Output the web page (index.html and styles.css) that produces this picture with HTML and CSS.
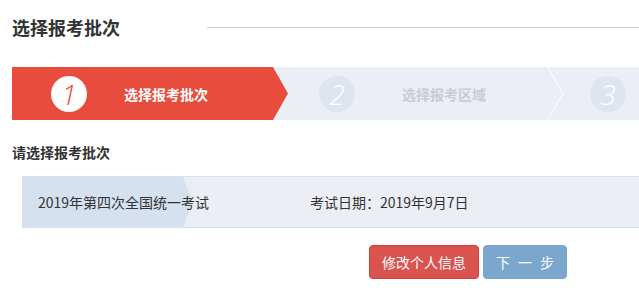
FILE: index.html
```html
<!DOCTYPE html>
<html lang="zh">
<head>
<meta charset="utf-8">
<link rel="stylesheet" href="styles.css">
</head>
<body>
<div class="page">
  <div class="title-row">
    <h1 class="title">选择报考批次</h1>
    <div class="title-line"></div>
  </div>

  <div class="steps">
    <div class="step step-active">
      <span class="num num-active">1</span>
      <span class="step-label">选择报考批次</span>
    </div>
    <div class="step step-2">
      <span class="num">2</span>
      <span class="step-label label-muted">选择报考区域</span>
      <svg class="chev" width="17" height="53" viewBox="0 0 17 53"><polyline points="0.5,0 16,26.5 0.5,53" fill="none" stroke="#ffffff" stroke-width="1"/></svg>
      <span class="num num-3">3</span>
    </div>
  </div>

  <div class="subtitle">请选择报考批次</div>

  <div class="batch">
    <div class="batch-name">2019年第四次全国统一考试</div>
    <div class="batch-date">考试日期：2019年9月7日</div>
  </div>

  <div class="actions">
    <button class="btn btn-red">修改个人信息</button>
    <button class="btn btn-blue">下一步</button>
  </div>
</div>
</body>
</html>
```

FILE: styles.css
```css
* { box-sizing: border-box; }
html, body { margin: 0; padding: 0; background: #ffffff; }
body {
  font-family: "Noto Sans CJK SC", "Noto Sans", sans-serif;
  color: #333333;
  width: 639px;
  overflow: hidden;
}
.page { padding-top: 14px; }

.title-row {
  display: flex;
  align-items: center;
  padding-left: 12px;
  height: 26px;
}
.title {
  margin: 0;
  font-size: 18px;
  font-weight: bold;
  line-height: 26px;
  color: #333333;
}
.title-line {
  flex: 1;
  height: 1px;
  background: #cccccc;
  margin-left: 87px;
}

.steps {
  margin-top: 27px;
  margin-left: 12px;
  height: 53px;
  background: #ebeef4;
  display: flex;
}
.step {
  display: flex;
  align-items: center;
  height: 53px;
}
.step-active {
  width: 276px;
  background: #e84c3d;
  clip-path: polygon(0 0, 261px 0, 276px 50%, 261px 100%, 0 100%);
  padding-left: 39px;
}
.num {
  width: 36px;
  height: 36px;
  border-radius: 50%;
  background: #dfe5ef;
  color: #ffffff;
  font-family: "Open Sans", "Noto Sans", sans-serif;
  font-style: italic;
  font-weight: 300;
  font-size: 28px;
  line-height: 36px;
  text-align: center;
  flex: none;
}
.num-active {
  background: #ffffff;
  color: #e84c3d;
}
.step-label {
  font-size: 14px;
  font-weight: bold;
  color: #ffffff;
  margin-left: 37px;
  white-space: nowrap;
}
.step-2 { padding-left: 31px; }
.label-muted { color: #c9ccd1; margin-left: 47px; }
.chev { margin-left: 61px; flex: none; display: block; }
.num-3 { margin-left: 26px; }

.subtitle {
  margin-top: 23px;
  padding-left: 12px;
  font-size: 14px;
  font-weight: bold;
  line-height: 18px;
  color: #333333;
}

.batch {
  position: relative;
  margin-top: 15px;
  margin-left: 22px;
  height: 52px;
  background: #ebeef4;
  border-top: 1px solid #d6e1f0;
  border-bottom: 1px solid #d6e1f0;
  display: flex;
  align-items: center;
  font-size: 14px;
  color: #333333;
}
.batch::before {
  content: "";
  position: absolute;
  left: 0;
  top: 0;
  bottom: 0;
  width: 171px;
  background: #d6e1ef;
  clip-path: polygon(0 0, 161px 0, 171px 50%, 161px 100%, 0 100%);
}
.batch-name {
  position: relative;
  padding-left: 16px;
  width: 288px;
  white-space: nowrap;
}
.batch-date {
  white-space: nowrap;
}

.actions {
  margin-top: 17px;
  padding-left: 369px;
  display: flex;
  gap: 4px;
}
.btn {
  height: 34px;
  border-radius: 4px;
  font-family: "Noto Sans CJK SC", "Noto Sans", sans-serif;
  font-size: 14px;
  color: #ffffff;
  padding: 0;
  cursor: pointer;
}
.btn-red {
  width: 110px;
  background: #d9534f;
  border: 1px solid #d43f3a;
}
.btn-blue {
  width: 84px;
  background: #7ba7cf;
  border: 1px solid #79a4cc;
  letter-spacing: 8px;
  padding-left: 8px;
}
```
